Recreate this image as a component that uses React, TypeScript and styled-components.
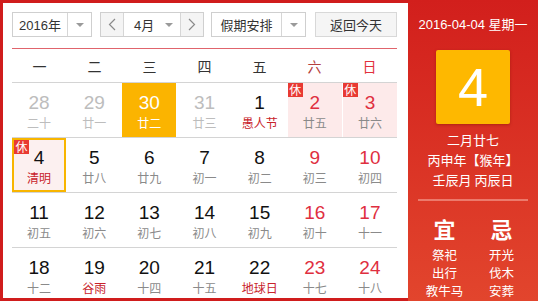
import * as React from 'react'
import styled, { createGlobalStyle, css } from 'styled-components'

const GlobalStyle = createGlobalStyle`
  html, body {
    margin: 0;
    padding: 0;
    background: #fff;
  }
  body {
    font-family: "Liberation Sans", "Noto Sans CJK SC", sans-serif;
  }
`

type Day = {
  num: number
  lunar: string
  other?: boolean
  today?: boolean
  selected?: boolean
  rest?: boolean
  weekend?: boolean
  festival?: boolean
}

const weeks: Day[][] = [
  [
    { num: 28, lunar: '二十', other: true },
    { num: 29, lunar: '廿一', other: true },
    { num: 30, lunar: '廿二', today: true },
    { num: 31, lunar: '廿三', other: true },
    { num: 1, lunar: '愚人节', festival: true },
    { num: 2, lunar: '廿五', rest: true, weekend: true },
    { num: 3, lunar: '廿六', rest: true, weekend: true },
  ],
  [
    { num: 4, lunar: '清明', selected: true, rest: true, festival: true },
    { num: 5, lunar: '廿八' },
    { num: 6, lunar: '廿九' },
    { num: 7, lunar: '初一' },
    { num: 8, lunar: '初二' },
    { num: 9, lunar: '初三', weekend: true },
    { num: 10, lunar: '初四', weekend: true },
  ],
  [
    { num: 11, lunar: '初五' },
    { num: 12, lunar: '初六' },
    { num: 13, lunar: '初七' },
    { num: 14, lunar: '初八' },
    { num: 15, lunar: '初九' },
    { num: 16, lunar: '初十', weekend: true },
    { num: 17, lunar: '十一', weekend: true },
  ],
  [
    { num: 18, lunar: '十二' },
    { num: 19, lunar: '谷雨', festival: true },
    { num: 20, lunar: '十四' },
    { num: 21, lunar: '十五' },
    { num: 22, lunar: '地球日', festival: true },
    { num: 23, lunar: '十七', weekend: true },
    { num: 24, lunar: '十八', weekend: true },
  ],
]

const weekdays = ['一', '二', '三', '四', '五', '六', '日']

const Frame = styled.div`
  display: flex;
  width: 538px;
  height: 301px;
  overflow: hidden;
`

const Main = styled.div`
  box-sizing: border-box;
  width: 408px;
  height: 301px;
  border: 3px solid #d01d1d;
  border-right: none;
  padding: 9px 11px 0 9px;
  overflow: hidden;
`

const Toolbar = styled.div`
  display: flex;
  height: 25px;
  margin-bottom: 11px;
`

const Select = styled.div<{ $w: number; $gap: number }>`
  box-sizing: border-box;
  display: flex;
  width: ${p => p.$w}px;
  height: 25px;
  margin-right: ${p => p.$gap}px;
  border: 1px solid #cfcfcf;
  background: #fff;
  font-size: 13px;
  color: #333;
  white-space: nowrap;
`

const SelectText = styled.div`
  flex: 1;
  display: flex;
  align-items: center;
  justify-content: center;
`

const Caret = styled.div<{ $divider?: boolean }>`
  width: 23px;
  display: flex;
  align-items: center;
  justify-content: center;
  ${p => p.$divider && css`border-left: 1px solid #d6d6d6;`}

  &::after {
    content: '';
    border-left: 4px solid transparent;
    border-right: 4px solid transparent;
    border-top: 4px solid #9a9a9a;
  }
`

const ArrowButton = styled.div`
  width: 22px;
  display: flex;
  align-items: center;
  justify-content: center;
  background: #f4f4f4;
`

const MonthText = styled.div`
  flex: 1;
  display: flex;
  align-items: center;
  border-left: 1px solid #d6d6d6;
  border-right: 1px solid #d6d6d6;
  padding-left: 10px;
`

const MonthLabel = styled.span`
  flex: 1;
`

const TodayButton = styled.div`
  box-sizing: border-box;
  width: 82px;
  height: 25px;
  display: flex;
  align-items: center;
  justify-content: center;
  border: 1px solid #d8d8d8;
  background: #f5f5f5;
  font-size: 13px;
  color: #333;
`

const RedRule = styled.div`
  height: 1px;
  background: #e0646c;
`

const HeadRow = styled.div`
  display: grid;
  grid-template-columns: repeat(7, 1fr);
  height: 33px;
`

const HeadCell = styled.div<{ $tone: 'plain' | 'sat' | 'sun' }>`
  display: flex;
  align-items: center;
  justify-content: center;
  font-size: 14px;
  color: ${p => (p.$tone === 'sat' ? '#b5413f' : p.$tone === 'sun' ? '#e2303c' : '#333')};
`

const WeekRow = styled.div`
  display: grid;
  grid-template-columns: repeat(7, 1fr);
  column-gap: 1px;
  height: 54px;
  border-top: 1px solid #d4d4d4;
`

const Cell = styled.div<{ $today?: boolean; $selected?: boolean; $rest?: boolean }>`
  position: relative;
  box-sizing: border-box;
  display: flex;
  flex-direction: column;
  align-items: center;
  padding-top: 10px;
  background: ${p => (p.$today ? '#fbb400' : p.$rest ? '#fdeaea' : 'transparent')};
  ${p => p.$selected && css`
    border: 2px solid #f8b500;
    padding-top: 8px;
    background: #fcf0f0;
  `}
`

const Num = styled.div<{ $color: string }>`
  height: 20px;
  line-height: 20px;
  font-size: 19px;
  font-family: "Liberation Sans", Arial, sans-serif;
  color: ${p => p.$color};
`

const Lunar = styled.div<{ $color: string }>`
  height: 18px;
  line-height: 18px;
  margin-top: 1px;
  font-size: 12px;
  font-family: "Noto Sans CJK SC", sans-serif;
  color: ${p => p.$color};
`

const RestBadge = styled.div`
  position: absolute;
  top: 0;
  left: 0;
  width: 15px;
  height: 14px;
  background: #e83a33;
  color: #fff;
  font-size: 12px;
  line-height: 14px;
  text-align: center;
  font-family: "Noto Sans CJK SC", sans-serif;
`

const Panel = styled.div`
  flex: 1;
  height: 301px;
  display: flex;
  flex-direction: column;
  align-items: center;
  background: linear-gradient(#d21f1c, #e2452d);
  color: #fff;
  font-family: "Liberation Sans", "Noto Sans CJK SC", sans-serif;
`

const DateLine = styled.div`
  margin-top: 16px;
  font-size: 13px;
  line-height: 18px;
`

const BigDay = styled.div`
  width: 74px;
  height: 74px;
  margin-top: 16px;
  background: #feb800;
  border-radius: 2px;
  box-shadow: 0 1px 3px rgba(120, 20, 0, 0.45);
  display: flex;
  align-items: center;
  justify-content: center;
  font-size: 54px;
  font-family: "Liberation Sans", Arial, sans-serif;
`

const InfoLine = styled.div<{ $top?: number }>`
  margin-top: ${p => p.$top ?? 0}px;
  font-size: 13px;
  line-height: 20px;
  white-space: nowrap;
  font-family: "Noto Sans CJK SC", sans-serif;
`

const Divider = styled.div`
  width: 110px;
  height: 2px;
  margin-top: 9px;
  background: #ec7a6c;
`

const Advice = styled.div`
  display: grid;
  grid-template-columns: 57px 57px;
  margin-top: 11px;
`

const AdviceCol = styled.div`
  display: flex;
  flex-direction: column;
  align-items: center;
  font-family: "Noto Sans CJK SC", sans-serif;
`

const AdviceTitle = styled.div`
  font-size: 22px;
  font-weight: bold;
  line-height: 32px;
  margin-bottom: 2px;
`

const AdviceItem = styled.div`
  font-size: 12.5px;
  line-height: 18px;
`

const Chevron = ({ dir }: { dir: 'left' | 'right' }) => (
  <svg width="8" height="13" viewBox="0 0 8 13">
    <polyline
      points={dir === 'left' ? '7,1 1.5,6.5 7,12' : '1,1 6.5,6.5 1,12'}
      fill="none"
      stroke="#8a8a8a"
      strokeWidth="1.2"
    />
  </svg>
)

const numColor = (d: Day) => {
  if (d.today) return '#fff'
  if (d.other) return '#bdbdbd'
  if (d.weekend) return '#df2f3f'
  return '#111'
}

const lunarColor = (d: Day) => {
  if (d.today) return '#fff'
  if (d.other) return '#bdbdbd'
  if (d.festival) return '#c8232b'
  return '#8a8a8a'
}

export default function App() {
  return (
    <>
      <GlobalStyle />
      <Frame>
        <Main>
          <Toolbar>
            <Select $w={80} $gap={8}>
              <SelectText>2016年</SelectText>
              <Caret $divider />
            </Select>
            <Select $w={104} $gap={7}>
              <ArrowButton>
                <Chevron dir="left" />
              </ArrowButton>
              <MonthText>
                <MonthLabel>4月</MonthLabel>
                <Caret />
              </MonthText>
              <ArrowButton>
                <Chevron dir="right" />
              </ArrowButton>
            </Select>
            <Select $w={95} $gap={9}>
              <SelectText>假期安排</SelectText>
              <Caret $divider />
            </Select>
            <TodayButton>返回今天</TodayButton>
          </Toolbar>
          <RedRule />
          <HeadRow>
            {weekdays.map((w, i) => (
              <HeadCell key={w} $tone={i === 5 ? 'sat' : i === 6 ? 'sun' : 'plain'}>
                {w}
              </HeadCell>
            ))}
          </HeadRow>
          {weeks.map((week, wi) => (
            <WeekRow key={wi}>
              {week.map(d => (
                <Cell key={`${wi}-${d.num}`} $today={d.today} $selected={d.selected} $rest={d.rest}>
                  {d.rest && <RestBadge>休</RestBadge>}
                  <Num $color={numColor(d)}>{d.num}</Num>
                  <Lunar $color={lunarColor(d)}>{d.lunar}</Lunar>
                </Cell>
              ))}
            </WeekRow>
          ))}
        </Main>
        <Panel>
          <DateLine>2016-04-04 星期一</DateLine>
          <BigDay>4</BigDay>
          <InfoLine $top={6}>二月廿七</InfoLine>
          <InfoLine>丙申年【猴年】</InfoLine>
          <InfoLine>壬辰月 丙辰日</InfoLine>
          <Divider />
          <Advice>
            <AdviceCol>
              <AdviceTitle>宜</AdviceTitle>
              <AdviceItem>祭祀</AdviceItem>
              <AdviceItem>出行</AdviceItem>
              <AdviceItem>教牛马</AdviceItem>
            </AdviceCol>
            <AdviceCol>
              <AdviceTitle>忌</AdviceTitle>
              <AdviceItem>开光</AdviceItem>
              <AdviceItem>伐木</AdviceItem>
              <AdviceItem>安葬</AdviceItem>
            </AdviceCol>
          </Advice>
        </Panel>
      </Frame>
    </>
  )
}
